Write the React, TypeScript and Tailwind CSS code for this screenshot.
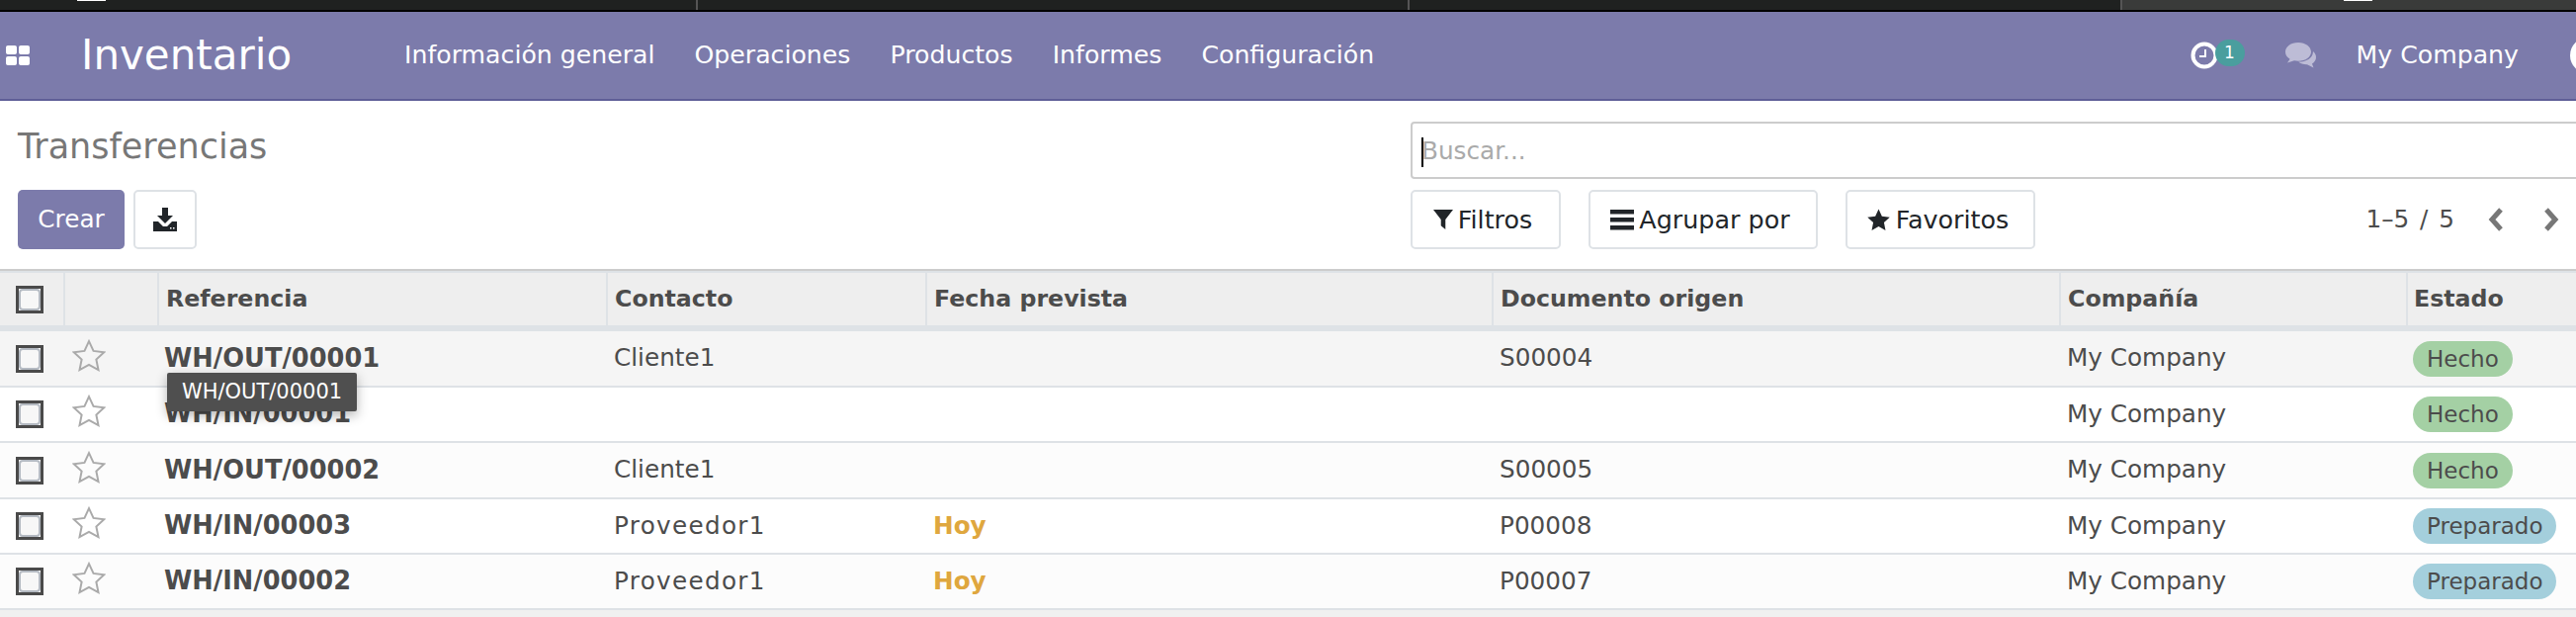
const rows = [
  { ref: "WH/OUT/00001", contact: "Cliente1", date: "", doc: "S00004", state: "Hecho", bg: "bg-[#f5f5f5]", h: "h-[57px]" },
  { ref: "WH/IN/00001", contact: "", date: "", doc: "", state: "Hecho", bg: "bg-white", h: "h-[56px]" },
  { ref: "WH/OUT/00002", contact: "Cliente1", date: "", doc: "S00005", state: "Hecho", bg: "bg-[#fcfcfc]", h: "h-[57px]" },
  { ref: "WH/IN/00003", contact: "Proveedor1", date: "Hoy", doc: "P00008", state: "Preparado", bg: "bg-white", h: "h-[56px]" },
  { ref: "WH/IN/00002", contact: "Proveedor1", date: "Hoy", doc: "P00007", state: "Preparado", bg: "bg-[#fcfcfc]", h: "h-[56px]" },
];

const cols = "grid grid-cols-[66px_95px_454px_323px_573px_574px_351px_1fr] items-center";

const Box = () => (
  <div className="w-[28px] h-[28px] border-[3px] border-[#4a4a4a] bg-white ml-[16px]">
    <div className="w-full h-full bg-[#f7f7f7] rounded-[4px] border-2 border-[#b4bac2]" />
  </div>
);

const STAR = "12,1.5 15.2,8.4 22.8,9.3 17.2,14.5 18.7,22 12,18.3 5.3,22 6.8,14.5 1.2,9.3 8.8,8.4";

const RowStar = () => (
  <svg viewBox="0 0 24 24" className="w-[34px] h-[34px] ml-[7px] -mt-[6px] block">
    <polygon points={STAR} fill="none" stroke="#aaa" strokeWidth="1.4" strokeLinejoin="miter" />
  </svg>
);

const btn = "h-[60px] border-2 border-[#dee2e6] rounded-[5px] flex items-center justify-center gap-[5px] pr-[6px] text-[#212529] text-[25.4px]";

export default function App() {
  return (
    <div className="relative w-[2606px] h-[624px] overflow-hidden bg-[#f0f0f0] text-[#4c4c4c] text-[24.7px] font-['DejaVu_Sans',sans-serif]">
      <div className="h-[12px] flex bg-[#1f2120] border-b-2 border-black">
        <div className="relative w-[706px] border-r-2 border-[#555]">
          <i className="absolute left-[78px] top-0 w-[29px] h-[1px] bg-white" />
        </div>
        <div className="w-[720px] border-r-2 border-[#555]" />
        <div className="w-[721px] border-r-2 border-[#555]" />
        <div className="relative flex-1 bg-[#3a3b3a]">
          <i className="absolute left-[224px] top-0 w-[29px] h-[1px] bg-white" />
        </div>
      </div>

      <div className="h-[90px] flex items-center bg-[#7c7bab] border-b-2 border-[#5f5e97] text-white text-[25.2px]">
        <div className="w-[82px] pl-[6px]">
          <div className="grid grid-cols-2 gap-[2px] w-[24px]">
            <i className="h-[9px] bg-white rounded-[2px]" /><i className="h-[9px] bg-white rounded-[2px]" />
            <i className="h-[9px] bg-white rounded-[2px]" /><i className="h-[9px] bg-white rounded-[2px]" />
          </div>
        </div>
        <div className="w-[327px] text-[42px] pb-[2px]">Inventario</div>
        <div className="flex gap-[40px] pb-[1px]">
          <span>Información general</span><span>Operaciones</span><span>Productos</span><span>Informes</span><span>Configuración</span>
        </div>
        <div className="ml-auto flex items-center">
          <svg viewBox="0 0 28 28" className="w-[28px] h-[28px]">
            <circle cx="14" cy="14" r="11.5" fill="none" stroke="white" strokeWidth="4" />
            <path d="M15 8v7H9" fill="none" stroke="white" strokeWidth="2" />
          </svg>
          <div className="w-[30px] h-[27px] -ml-[3px] -mt-[5px] rounded-full bg-[#4a9e9e] text-[17px] flex items-center justify-center">1</div>
          <svg viewBox="0 0 32 27" className="w-[32px] h-[27px] ml-[40px]">
            <path d="M14 1C6.5 1 1 5.2 1 10.5c0 3 1.8 5.6 4.6 7.3L3 21.5l7-2.2c1.3.3 2.6.5 4 .5 7.5 0 13-4.200 13-9.300S21.500 1 14 1z" fill="#bdbcd6" />
            <path d="M29 10c2 1.700 3 3.700 3 6 0 2.600-1.500 4.900-4 6.400l1.500 4.100-6.500-3.200c-3.500.1-6.500-.8-8.800-2.700 7 .2 14.800-3.300 14.800-10.600z" fill="#bdbcd6" />
          </svg>
          <span className="ml-[41px]">My Company</span>
          <div className="w-[36px] h-[36px] rounded-full bg-white ml-[52px] -mr-[30px]" />
        </div>
      </div>

      <div className="h-[170px] bg-white flex">
        <div className="w-[1427px] pl-[18px]">
          <div className="h-[90px] flex items-center text-[35px] text-[#777] pt-[2px]">Transferencias</div>
          <div className="flex gap-[9px]">
            <button className="w-[108px] h-[60px] bg-[#7c7bab] text-white rounded-[5px]">Crear</button>
            <button className="w-[64px] h-[60px] border-2 border-[#dee2e6] rounded-[5px] flex items-center justify-center">
              <svg viewBox="0 0 24 24" className="w-[24px] h-[24px]">
                <path d="M9 0h6v8h5l-8 8-8-8h5z" fill="#212529" />
                <path d="M0 14h5l5 5h4l5-5h5v10H0z" fill="#212529" />
                <rect x="17" y="20" width="1.500" height="1.500" fill="#fff" />
                <rect x="20" y="20" width="1.500" height="1.500" fill="#fff" />
              </svg>
            </button>
          </div>
        </div>
        <div className="flex-1 pt-[21px]">
          <div className="relative h-[58px] border-2 border-[#ccc] rounded-[4px] pl-[9px] pt-[2px] flex items-center text-[#aaa] -mr-[10px]">
            <i className="absolute left-[9px] top-[14px] w-[2px] h-[30px] bg-black" />
            Buscar...
          </div>
          <div className="flex gap-[28px] mt-[11px] items-center">
            <div className={`w-[152px] ${btn}`}>
              <svg viewBox="0 0 22 24" className="w-[20px] h-[24px]"><path d="M0 1h22L13.500 12v11L8.500 19v-7z" fill="#212529" /></svg>
              Filtros
            </div>
            <div className={`w-[232px] ${btn}`}>
              <svg viewBox="0 0 24 22" className="w-[24px] h-[22px]"><rect y="1" width="24" height="4.500" fill="#212529" /><rect y="9" width="24" height="4.500" fill="#212529" /><rect y="17" width="24" height="4.500" fill="#212529" /></svg>
              Agrupar por
            </div>
            <div className={`w-[192px] ${btn}`}>
              <svg viewBox="0 0 24 24" className="w-[25px] h-[25px]"><polygon points={STAR} fill="#212529" /></svg>
              Favoritos
            </div>
            <div className="ml-auto flex items-center pr-[17px]">
              <span className="[word-spacing:3px]">1–5 / 5</span>
              <svg viewBox="0 0 16 24" className="w-[16px] h-[24px] ml-[34px]"><path d="M13 2 4 12l9 10" fill="none" stroke="#777" strokeWidth="5" /></svg>
              <svg viewBox="0 0 16 24" className="w-[16px] h-[24px] ml-[40px]"><path d="M3 2l9 10-9 10" fill="none" stroke="#777" strokeWidth="5" /></svg>
            </div>
          </div>
        </div>
      </div>

      <div className={`${cols} h-[63px] bg-[#eee] border-t-2 border-t-[#ccc] border-b-[6px] border-b-[#dee2e6] font-bold text-[23.7px] shadow-[inset_0_2px_0_#dee2e6]`}>
        <div className="h-full flex items-center pt-[3px] border-r-2 border-[#dee2e6]"><Box /></div>
        <div className="h-full border-r-2 border-[#dee2e6]" />
        {["Referencia", "Contacto", "Fecha prevista", "Documento origen", "Compañía"].map((t) => (
          <div key={t} className="h-full flex items-center pl-[7px] pt-[2px] border-r-2 border-[#dee2e6]">{t}</div>
        ))}
        <div className="pl-[6px] pt-[2px]">Estado</div>
      </div>

      {rows.map((r) => (
        <div key={r.ref} className={`${cols} ${r.h} border-b-2 border-[#dee2e6] ${r.bg}`}>
          <Box />
          <RowStar />
          <div className="pl-[5px] font-bold text-[25.7px] pb-[1px]">{r.ref}</div>
          <div className={`pl-[6px] pb-[1px] ${r.contact === "Proveedor1" ? "tracking-[1.3px]" : ""}`}>{r.contact}</div>
          <div className="pl-[6px] pb-[1px] font-bold text-[#dfa73e]">{r.date}</div>
          <div className="pl-[6px] pb-[1px]">{r.doc}</div>
          <div className="pl-[6px] pb-[1px]">My Company</div>
          <div className="pl-[5px] text-[23px]">
            <span className={`inline-block h-[36px] leading-[36px] px-[14px] rounded-full ${r.state === "Hecho" ? "bg-[#a4d0a4]" : "bg-[#a4cfdc]"}`}>{r.state}</span>
          </div>
        </div>
      ))}

      <div className="absolute left-[169px] top-[377px] w-[192px] h-[39px] bg-[#4f4f4f] rounded-[2px] text-white text-[21px] flex items-center justify-center shadow-[0_4px_12px_rgba(0,0,0,0.3)]">
        WH/OUT/00001
      </div>
    </div>
  );
}
